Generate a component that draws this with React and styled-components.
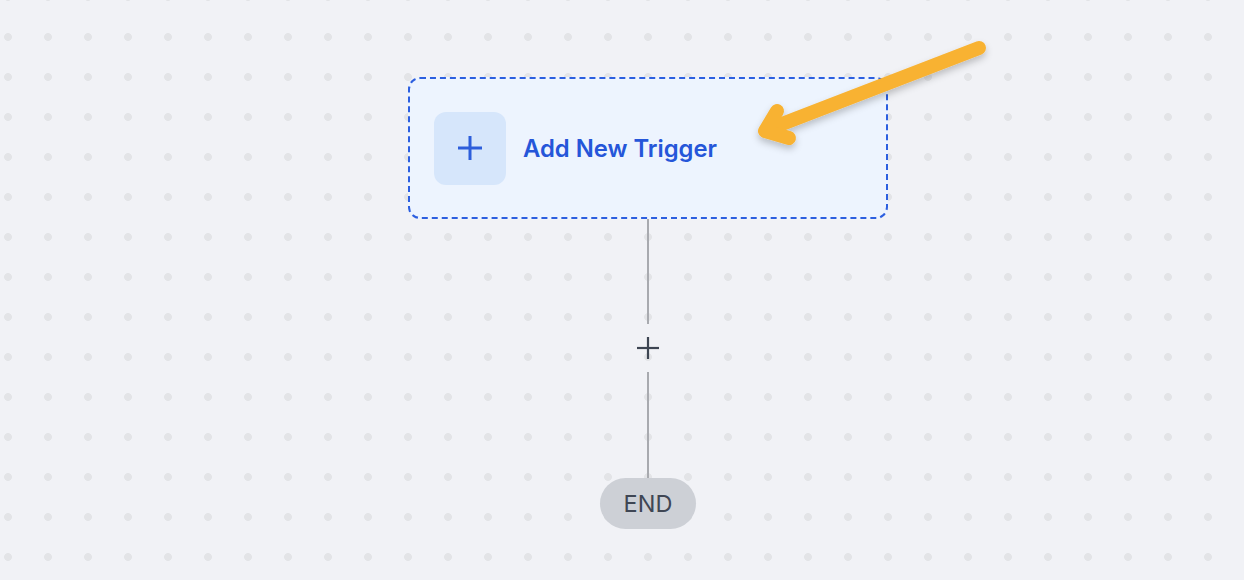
import React from "react";
import styled, { createGlobalStyle } from "styled-components";

const Global = createGlobalStyle`
  html, body { margin: 0; padding: 0; height: 100%; }
  body { font-family: Inter, "Noto Sans", sans-serif; background: #f1f2f6; }
  #root { height: 100%; }
`;

const Canvas = styled.div`
  position: relative;
  width: 1244px;
  height: 580px;
  overflow: hidden;
  background-color: #f1f2f6;
  background-image: radial-gradient(circle at center, #e3e4e7 0, #e3e4e7 3.6px, transparent 4.2px);
  background-size: 40px 40px;
  background-position: -12px 17px;
`;

const Flow = styled.div`
  display: flex;
  flex-direction: column;
  align-items: center;
  padding-top: 77px;
  padding-left: 52px;
`;

const TriggerCard = styled.div`
  box-sizing: border-box;
  width: 480px;
  height: 142px;
  border: 2px dashed #2c5fe0;
  border-radius: 12px;
  background: #edf4fe;
  display: flex;
  align-items: center;
  gap: 17px;
  padding-left: 24px;
  cursor: pointer;
`;

const IconTile = styled.div`
  width: 72px;
  height: 73px;
  border-radius: 12px;
  background: #d6e6fb;
  display: flex;
  align-items: center;
  justify-content: center;
  color: #2d5edb;
`;

const TriggerLabel = styled.span`
  font-size: 23.8px;
  font-weight: 600;
  color: #2556d9;
`;

const Line = styled.div`
  width: 2px;
  height: ${(p) => p.$h}px;
  background: #a8aaaf;
`;

const AddStep = styled.div`
  height: 48px;
  display: flex;
  align-items: center;
  justify-content: center;
  color: #3d4552;
`;

const EndPill = styled.div`
  width: 96px;
  height: 51px;
  border-radius: 26px;
  background: #cdd0d6;
  display: flex;
  align-items: center;
  justify-content: center;
  font-size: 23.5px;
  color: #3f4654;
`;

const ArrowOverlay = styled.svg`
  position: absolute;
  left: 0;
  top: 0;
  pointer-events: none;
  overflow: visible;
`;

const Plus = ({ size, stroke }) => (
  <svg width={size} height={size} viewBox={`0 0 ${size} ${size}`}>
    <line x1={size / 2} y1="0" x2={size / 2} y2={size} stroke="currentColor" strokeWidth={stroke} />
    <line x1="0" y1={size / 2} x2={size} y2={size / 2} stroke="currentColor" strokeWidth={stroke} />
  </svg>
);

export default function App() {
  return (
    <>
      <Global />
      <Canvas>
        <Flow>
          <TriggerCard>
            <IconTile>
              <Plus size={24} stroke={3} />
            </IconTile>
            <TriggerLabel>Add New Trigger</TriggerLabel>
          </TriggerCard>
          <Line $h={105} />
          <AddStep>
            <Plus size={22} stroke={2.2} />
          </AddStep>
          <Line $h={106} />
          <EndPill>END</EndPill>
        </Flow>
        <ArrowOverlay width="1244" height="580">
          <defs>
            <filter id="sh" x="-20%" y="-50%" width="140%" height="200%">
              <feDropShadow dx="0" dy="4" stdDeviation="3.5" floodColor="#000" floodOpacity="0.22" />
            </filter>
          </defs>
          <g filter="url(#sh)" stroke="#f8b232" strokeWidth="14" strokeLinecap="round" strokeLinejoin="round" fill="none">
            <line x1="979" y1="48" x2="769" y2="129" />
            <polyline points="777,111 765,131 789,138" />
          </g>
        </ArrowOverlay>
      </Canvas>
    </>
  );
}
